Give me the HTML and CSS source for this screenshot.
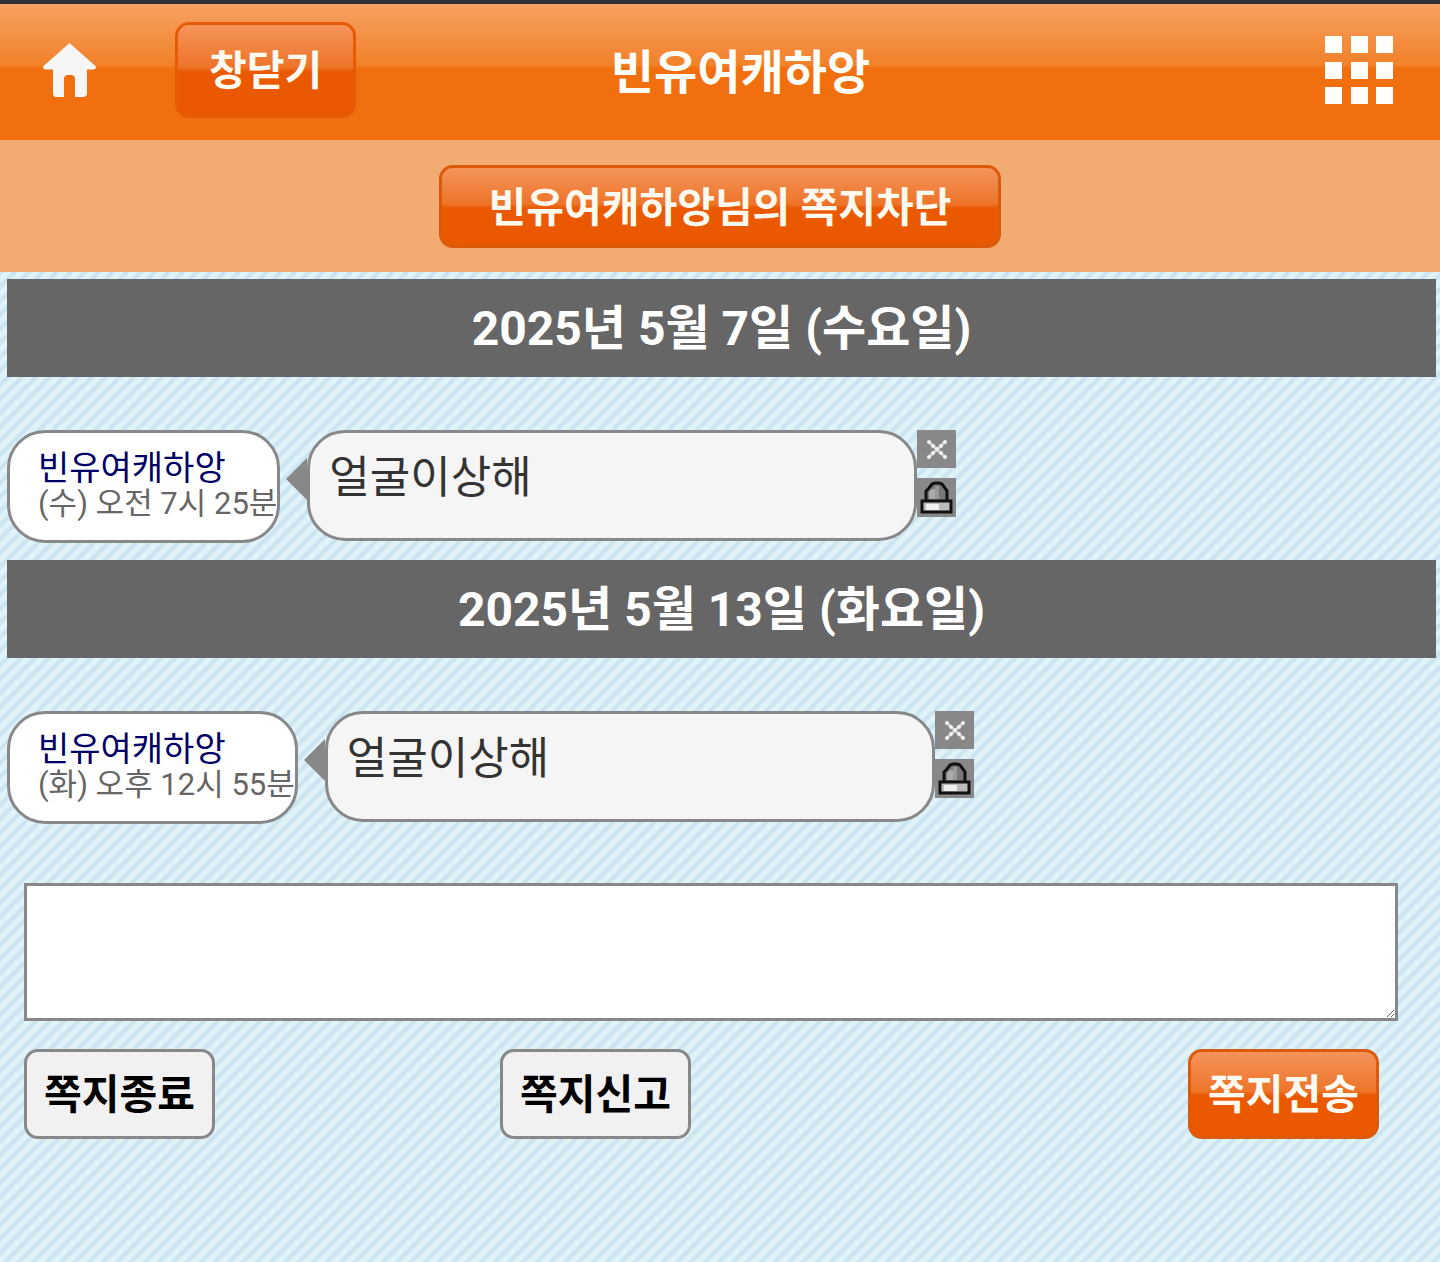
FILE: index.html
```
<!DOCTYPE html>
<html lang="ko">
<head>
    <meta charset="UTF-8">
    <meta name="viewport" content="width=device-width, initial-scale=1.0">
    <title>빈유여캐하앙</title>
    <link rel="stylesheet" href="styles.css">
</head>
<body>

    <!-- 아이콘 -->
    <svg class="icons" aria-hidden="true">
        <symbol id="icon-delete" viewBox="0 0 39 38">
            <path stroke="#ccc" stroke-width="3" d="M12 12L28 27M28 12L12 27"/>
            <path stroke="#f2f2f2" stroke-width="4" stroke-linecap="round" d="M12 12h0M16 16h0M20 19h0M24 23h0M28 27h0M28 12h0M24 16h0M16 23h0M12 27h0"/>
        </symbol>
        <symbol id="icon-report" viewBox="0 0 39 39">
            <path fill="#777" stroke="#111" stroke-width="3" d="M9 23V13L12 10L15 6L18 5H22L25 6L28 10L30 13V23"/>
            <path fill="#aaa" d="M12 21V14L15 11H18V21z"/>
            <path fill="#999" d="M18 8H22V21H18z"/>
            <path fill="#bbb" stroke="#111" stroke-width="3" d="M5 23H34V34H5z"/>
            <path fill="#eee" d="M9 26H22V32H9z"/>
        </symbol>
    </svg>

    <div class="header">
        <div class="header-left">
            <a href="#" class="home" aria-label="홈">
                <svg width="54" height="54" viewBox="0 0 54 54">
                    <path fill="#f5f5f5" d="M26.500 0L53 23.500Q53 26.500 50 26.500H44V50Q44 54 40 54H32V36Q32 32 28 32H25Q21 32 21 36V54H13Q10 54 10 50V26.500H3Q0 26.500 0 23.500Z"/>
                </svg>
            </a>
            <button type="button" class="btn btn-orange btn-close">창닫기</button>
        </div>
        <h1>빈유여캐하앙</h1>
        <a href="#" class="menu" aria-label="메뉴">
            <svg width="70" height="70" viewBox="0 0 70 70" fill="#fffefa">
                <path d="M1 1h17v17H1zM27 1h17v17H27zM52 1h17v17H52zM1 27h17v17H1zM27 27h17v17H27zM52 27h17v17H52zM1 52h17v17H1zM27 52h17v17H27zM52 52h17v17H52z"/>
            </svg>
        </a>
    </div>

    <div class="block-bar">
        <button type="button" class="btn btn-orange btn-block">빈유여캐하앙님의 쪽지차단</button>
    </div>

    <div class="talk">
        <h2 class="date">2025년 5월 7일 (수요일)</h2>
        <div class="message">
            <div class="sender">
                <a href="#">빈유여캐하앙</a>
                <span>(수) 오전 7시 25분</span>
            </div>
            <div class="arrow"></div>
            <div class="bubble">얼굴이상해</div>
            <div class="tools">
                <button type="button" aria-label="삭제"><svg width="39" height="38"><use href="#icon-delete"/></svg></button>
                <button type="button" aria-label="신고"><svg width="39" height="39"><use href="#icon-report"/></svg></button>
            </div>
        </div>

        <h2 class="date">2025년 5월 13일 (화요일)</h2>
        <div class="message">
            <div class="sender">
                <a href="#">빈유여캐하앙</a>
                <span>(화) 오후 12시 55분</span>
            </div>
            <div class="arrow"></div>
            <div class="bubble">얼굴이상해</div>
            <div class="tools">
                <button type="button" aria-label="삭제"><svg width="39" height="38"><use href="#icon-delete"/></svg></button>
                <button type="button" aria-label="신고"><svg width="39" height="39"><use href="#icon-report"/></svg></button>
            </div>
        </div>
    </div>

    <form class="write">
        <div class="write-box">
            <textarea aria-label="쪽지 내용"></textarea>
        </div>
        <div class="write-buttons">
            <button type="button" class="btn btn-gray">쪽지종료</button>
            <button type="button" class="btn btn-gray">쪽지신고</button>
            <button type="submit" class="btn btn-orange">쪽지전송</button>
        </div>
    </form>

</body>
</html>
```

FILE: styles.css
```
* {
    box-sizing: border-box;
}

body {
    margin: 0;
    min-height: 100vh;
    font-family: Roboto, "Noto Sans CJK KR", sans-serif;
    color: #333;
    background: linear-gradient(135deg, #e0f3f9 7%, #c8e1ef 25%, #e0f3f9 43%, #e0f3f9 57%, #c8e1ef 75%, #e0f3f9 93%) 0 0 / 14px 14px;
}

.icons {
    display: none;
}

.header {
    display: grid;
    grid-template-columns: 1fr auto 1fr;
    align-items: center;
    height: 140px;
    padding: 0 46px 4px 43px;
    border-top: 4px solid #30343a;
    background: linear-gradient(#f7a162, #f28129 45%, #f16f0e 47%, #f16f0e);
}

.header-left {
    display: flex;
    align-items: center;
    gap: 78px;
}

.home, .menu {
    display: block;
    line-height: 0;
}

.menu {
    justify-self: end;
}

h1 {
    margin: 0 0 0 44px;
    padding-top: 6px;
    color: #fffefa;
    font-size: 47px;
    line-height: 64px;
}

.btn {
    height: 90px;
    padding: 0 17px 6px;
    font-family: inherit;
    font-size: 41px;
    font-weight: bold;
    border-radius: 14px;
    cursor: pointer;
}

.btn-orange {
    color: #fffaf0;
    border: 3px solid #dc5a0c;
    background: linear-gradient(#f4945c, #ee7428 47%, #ea5800 52%, #ea5800);
}

.btn-gray {
    color: #000;
    border: 3px solid #888;
    background: #f1f1f1;
}

.btn-close {
    height: 96px;
    padding: 0 31px 6px;
    border-color: #e65c06;
}

.block-bar {
    display: flex;
    justify-content: center;
    padding: 25px 0 24px;
    background: #f2ab73;
}

.btn-block {
    height: 83px;
    padding: 0 47px 6px;
}

.talk {
    padding: 7px 4px 0 7px;
}

.date {
    margin: 0;
    padding: 18px 0 16px;
    color: #fff;
    font-size: 48px;
    line-height: 64px;
    text-align: center;
    background: #666;
}

.message {
    display: flex;
    align-items: flex-start;
    padding: 53px 0 17px;
}

.sender {
    height: 113px;
    padding: 17px 0 0 28px;
    white-space: nowrap;
    border: 3px solid #888;
    border-radius: 38px;
    background: #fff;
}

.sender a, .sender span {
    display: block;
    font-size: 34px;
    line-height: 36px;
    text-decoration: none;
    color: #000066;
}

.sender span {
    color: #666;
    font-size: 31px;
}

.arrow {
    margin: 28px 0 0 6px;
    border: 21px solid transparent;
    border-left: 0;
    border-right-color: #888;
}

.bubble {
    width: 610px;
    height: 111px;
    padding: 13px 19px;
    font-size: 44px;
    line-height: 64px;
    border: 3px solid #888;
    border-radius: 38px;
    background: #f5f5f5;
}

.tools {
    display: flex;
    flex-direction: column;
    gap: 10px;
}

.tools button {
    padding: 0;
    line-height: 0;
    border: 0;
    background: #888;
    cursor: pointer;
}

.write {
    padding: 42px 42px 0 24px;
}

.write-box {
    display: flex;
}

.write textarea {
    flex: 1;
    height: 138px;
    padding: 8px;
    font: 41px/48px Roboto, "Noto Sans CJK KR", sans-serif;
    border: 3px solid #888;
    border-radius: 0;
    background: #fff;
}

.write-buttons {
    display: grid;
    grid-template-columns: 476fr 688fr auto;
    justify-items: start;
    padding: 28px 19px 0 0;
}
```
